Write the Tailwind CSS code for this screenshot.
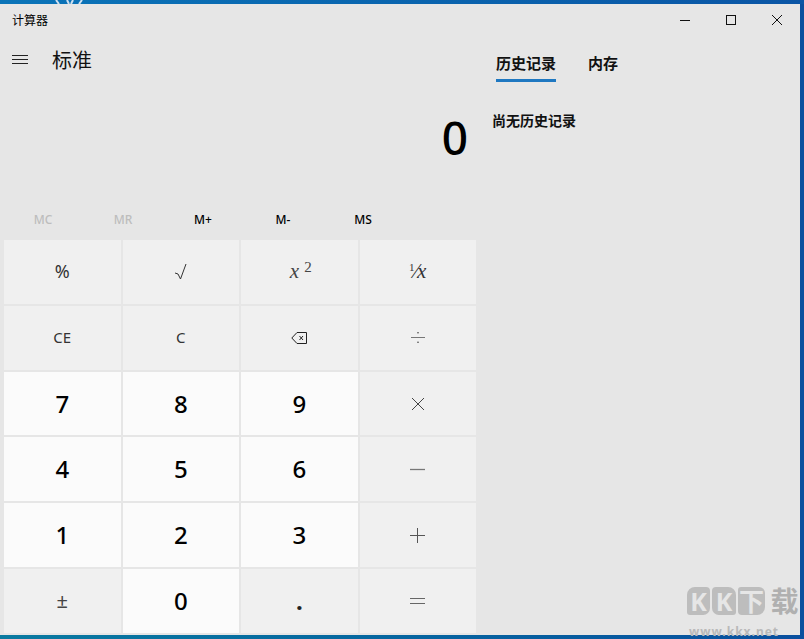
<!DOCTYPE html>
<html lang="zh">
<head>
<meta charset="utf-8">
<script src="https://cdn.jsdelivr.net/npm/@tailwindcss/browser@4"></script>
<title>计算器</title>
</head>
<body class="relative h-[639px] w-[804px] overflow-hidden bg-gradient-to-r from-[#0a7aa0] to-[#0a4f9e] font-['Noto_Sans','Noto_Sans_CJK_SC',sans-serif] text-black">
<div class="relative h-[4px] bg-gradient-to-r from-[#0a74b8] to-[#0a55a5]">
  <svg class="absolute left-[54px] top-0" width="30" height="4" viewBox="0 0 30 4" fill="none" stroke="#cfe0f0" stroke-width="2"><path d="M2 0l3 4M13 0l2 4M19 0l-2 4M28 0l-3 4"/></svg>
</div>
<div class="relative flex h-[631px] w-[800px] flex-col bg-[#e6e6e6]">
  <div class="flex h-[31px] items-center justify-between">
    <span class="pl-[12px] pt-[1px] text-[12px] leading-[31px]">计算器</span>
    <div class="flex h-[31px]">
      <div class="flex w-[46px] items-center justify-center"><svg width="10" height="10" viewBox="0 0 10 10" fill="none" stroke="#111"><path d="M0 5.500h10"/></svg></div>
      <div class="flex w-[46px] items-center justify-center"><svg width="10" height="10" viewBox="0 0 10 10" fill="none" stroke="#111"><rect x=".5" y=".5" width="9" height="9"/></svg></div>
      <div class="flex w-[46px] items-center justify-center"><svg width="10" height="10" viewBox="0 0 10 10" fill="none" stroke="#111"><path d="M0 0l10 10M10 0L0 10"/></svg></div>
    </div>
  </div>
  <div class="flex flex-1">
    <div class="flex w-[480px] flex-col">
      <div class="flex h-[50px] items-center">
        <svg class="ml-[12px]" width="16" height="12" viewBox="0 0 16 12" fill="none" stroke="#222"><path d="M0 1.500h16M0 5.500h16M0 9.500h16"/></svg>
        <span class="ml-[24px] pt-[1px] text-[20px] leading-[28px] text-[#111]">标准</span>
      </div>
      <div class="flex h-[115px] items-start justify-end pr-[12px] pt-[24px]">
        <span class="text-[46px] font-medium leading-[56px]">0</span>
      </div>
      <div class="flex h-[40px] pl-[3px] text-[12px] font-medium">
        <span class="flex w-[80px] items-center justify-center text-[#bdbdbd]">MC</span>
        <span class="flex w-[80px] items-center justify-center text-[#bdbdbd]">MR</span>
        <span class="flex w-[80px] items-center justify-center">M+</span>
        <span class="flex w-[80px] items-center justify-center">M-</span>
        <span class="flex w-[80px] items-center justify-center">MS</span>
      </div>
      <div class="ml-[4px] grid h-[393px] w-[472px] grid-cols-4 grid-rows-6 gap-[2px] text-[#222]">
        <button class="flex items-center justify-center bg-[#f0f0f0] text-[18px] text-[#333]">%</button>
        <button class="flex items-center justify-center bg-[#f0f0f0]"><svg width="13" height="17" viewBox="0 0 13 17" fill="none" stroke="#333"><path d="M1 10l3 1 2.500 5L12 1"/></svg></button>
        <button class="flex items-center justify-center bg-[#f0f0f0] pl-[3px] font-['Liberation_Serif',serif] text-[21px] italic text-[#444]">x<span class="mb-[8px] ml-[5px] text-[15px] not-italic leading-none">2</span></button>
        <button class="flex items-center justify-center bg-[#f0f0f0] font-['Liberation_Serif',serif] text-[21px] text-[#333]"><span class="mb-[8px] text-[11px] leading-none">1</span><span class="leading-none">⁄</span><i class="-ml-[1px]">x</i></button>
        <button class="flex items-center justify-center bg-[#f0f0f0] text-[15px] text-[#333]">CE</button>
        <button class="flex items-center justify-center bg-[#f0f0f0] text-[15px] text-[#333]">C</button>
        <button class="flex items-center justify-center bg-[#f0f0f0]"><svg width="16" height="12" viewBox="0 0 16 12" fill="none" stroke="#222"><path d="M15.500.5H6L.8 6 6 11.500h9.500zM8.500 4l3.500 4M12 4L8.500 8"/></svg></button>
        <button class="flex items-center justify-center bg-[#f0f0f0]"><svg width="14" height="13" viewBox="0 0 14 13" fill="none"><path d="M0 6.500h14" stroke="#777"/><rect x="6.300" y="1" width="1.400" height="1.400" fill="#555"/><rect x="6.300" y="10.600" width="1.400" height="1.400" fill="#555"/></svg></button>
        <button class="flex items-center justify-center bg-[#fbfbfb] text-[24px] font-medium text-black">7</button>
        <button class="flex items-center justify-center bg-[#fbfbfb] text-[24px] font-medium text-black">8</button>
        <button class="flex items-center justify-center bg-[#fbfbfb] text-[24px] font-medium text-black">9</button>
        <button class="flex items-center justify-center bg-[#f0f0f0]"><svg width="14" height="14" viewBox="0 0 14 14" fill="none" stroke="#444"><path d="M1 1l12 12M13 1L1 13"/></svg></button>
        <button class="flex items-center justify-center bg-[#fbfbfb] text-[24px] font-medium text-black">4</button>
        <button class="flex items-center justify-center bg-[#fbfbfb] text-[24px] font-medium text-black">5</button>
        <button class="flex items-center justify-center bg-[#fbfbfb] text-[24px] font-medium text-black">6</button>
        <button class="flex items-center justify-center bg-[#f0f0f0]"><svg width="15" height="15" viewBox="0 0 15 15" fill="none" stroke="#777" stroke-width="1.300"><path d="M0 7.500h15"/></svg></button>
        <button class="flex items-center justify-center bg-[#fbfbfb] text-[24px] font-medium text-black">1</button>
        <button class="flex items-center justify-center bg-[#fbfbfb] text-[24px] font-medium text-black">2</button>
        <button class="flex items-center justify-center bg-[#fbfbfb] text-[24px] font-medium text-black">3</button>
        <button class="flex items-center justify-center bg-[#f0f0f0]"><svg width="15" height="15" viewBox="0 0 15 15" fill="none" stroke="#555"><path d="M0 7.500h15M7.500 0v15"/></svg></button>
        <button class="flex items-center justify-center bg-[#f0f0f0] text-[20px] text-[#444]">±</button>
        <button class="flex items-center justify-center bg-[#fbfbfb] text-[24px] font-medium text-black">0</button>
        <button class="flex items-center justify-center bg-[#f0f0f0] text-[24px] font-bold">.</button>
        <button class="flex items-center justify-center bg-[#f0f0f0]"><svg width="15" height="12" viewBox="0 0 15 12" fill="none" stroke="#666"><path d="M0 3.500h15M0 8.500h15"/></svg></button>
      </div>
    </div>
    <div class="flex-1">
      <div class="flex gap-[32px] pl-[16px] pt-[10px] text-[15px] font-bold text-[#111]">
        <div class="flex flex-col"><span class="h-[36px] leading-[36px]">历史记录</span><span class="mt-[-2px] h-[3px] w-[60px] bg-[#1f78c1]"></span></div>
        <span class="leading-[36px]">内存</span>
      </div>
      <p class="pl-[12px] pt-[29px] text-[14px] font-bold leading-[20px] text-[#111]">尚无历史记录</p>
    </div>
  </div>
</div>
<div class="absolute left-[687px] top-[587px] flex w-[116px] flex-col items-start">
  <div class="flex text-[25px] font-bold leading-[28px] text-[#e6e6e6]">
    <span class="flex h-[28px] w-[23px] items-center justify-center rounded-[8px_4px_7px_3px] bg-[#bdbdbd]">K</span>
    <span class="ml-[2px] flex h-[28px] w-[24px] items-center justify-center rounded-[4px_8px_3px_7px] bg-[#bdbdbd]">K</span>
    <span class="ml-[2px] flex h-[28px] w-[27px] items-center justify-center rounded-[3px_6px_8px_4px] bg-[#bdbdbd]">下</span>
    <span class="ml-[5px] flex h-[28px] w-[29px] items-center justify-center text-[28px] text-[#b0b0b0]">载</span>
  </div>
  <span class="ml-[2px] mt-[11px] text-[12px] font-bold leading-[11px] tracking-[1px] text-[#b9b9b9]">www.kkx.net</span>
</div>
</body>
</html>
